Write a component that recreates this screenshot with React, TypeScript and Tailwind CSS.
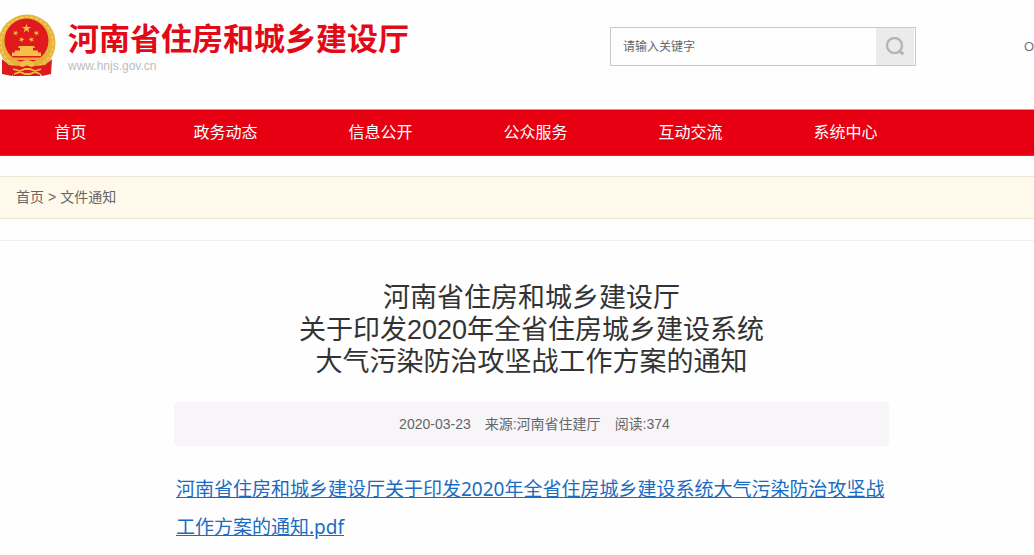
import React from 'react';

interface NavItem {
  label: string;
  href: string;
}

const navItems: NavItem[] = [
  { label: '首页', href: '#home' },
  { label: '政务动态', href: '#news' },
  { label: '信息公开', href: '#open' },
  { label: '公众服务', href: '#service' },
  { label: '互动交流', href: '#interact' },
  { label: '系统中心', href: '#system' },
];

const STAR = '0,-1 .22,-.31 .95,-.31 .36,.12 .59,.81 0,.38 -.59,.81 -.36,.12 -.95,-.31 -.22,-.31';

const Emblem: React.FC = () => (
  <svg className="w-[56px] h-[64px] shrink-0" viewBox="0 0 56 64" aria-hidden="true">
    <circle cx="27" cy="29" r="28.5" fill="#e6b33a" />
    <circle cx="27" cy="29" r="26" fill="none" stroke="#f3cf62" strokeWidth="1.5" strokeDasharray="3 2" />
    <circle cx="26.5" cy="26.5" r="22" fill="#e01a1c" />
    <g fill="#f3bf45">
      <polygon points={STAR} transform="translate(26.5 14.5) scale(4.8)" />
      <polygon points={STAR} transform="translate(15.5 19) rotate(20) scale(3)" />
      <polygon points={STAR} transform="translate(36.5 19) rotate(-20) scale(3)" />
      <polygon points={STAR} transform="translate(21.5 25.5) rotate(20) scale(3)" />
      <polygon points={STAR} transform="translate(31.5 25.5) rotate(-20) scale(3)" />
      {/* gate tower */}
      <path d="M19 32 H34 L35 34 H33 V36.5 H38 V38.5 H41 V42 H12 V38.5 H15 V36.5 H20 V34 H18 Z" />
      <path d="M8 43.5 H45 L43 46 H10 Z" fill="#e6a832" />
    </g>
    {/* drapery and cog wheel */}
    <path d="M2 45 L9 51 L18 52 L12 62 L2 60 Z M52 45 L45 51 L36 52 L42 62 L51 60 Z" fill="#dc1c1c" />
    <path d="M12 54 L20 51 L27 49 L34 51 L42 54 L40 62 H13 Z" fill="#e01a1c" />
    <path d="M19 52 Q20 46 27 46 Q34 46 35 52 L31 53 Q27 50 23 53 Z" fill="#f0bf48" />
    <path
      d="M13 55 L20 57 L25 55 L30 55 L35 57 L41 55 M14 60 L20 58 L25 60 H30 L35 58 L40 60"
      fill="none"
      stroke="#eebc42"
      strokeWidth="1.8"
    />
  </svg>
);

const Header: React.FC = () => (
  <header className="flex h-[109px] overflow-hidden">
    <a href="#home" className="flex shrink-0 items-start gap-3 pt-[14px]">
      <Emblem />
      <span className="flex flex-col pt-1.5">
        <span className="text-[31px] leading-10 font-bold text-[#e20a17]">河南省住房和城乡建设厅</span>
        <span className="text-xs leading-3 text-[#bdbdbd]">www.hnjs.gov.cn</span>
      </span>
    </a>
    <form className="ml-auto mt-[27px] flex h-[39px] w-[306px] shrink-0 border border-[#c8c8c8] pr-px">
      <input
        type="text"
        aria-label="请输入关键字"
        placeholder="请输入关键字"
        className="min-w-0 flex-1 px-3 text-xs text-[#666] outline-none placeholder:text-[#666]"
      />
      <button type="button" aria-label="搜索" className="flex w-[38px] items-center justify-center bg-[#ebebeb]">
        <svg className="h-5 w-5" viewBox="0 0 20 20" fill="none" stroke="#b5b5b5" strokeWidth="2.4">
          <circle cx="9.5" cy="8.5" r="7.5" />
          <path d="M13.5 14 L18.5 17" strokeWidth="3" />
        </svg>
      </button>
    </form>
    <a href="#oa" className="ml-[108px] mt-[37px] w-[10px] shrink-0 overflow-hidden text-[13px] leading-5 text-[#777]">
      O
    </a>
  </header>
);

const App: React.FC = () => {
  return (
    <div className="min-h-screen overflow-x-hidden bg-[#fefefe] font-['Liberation_Sans','Noto_Sans_CJK_SC',sans-serif]">
      <Header />

      <nav className="border-y border-t-[#f08a90] border-b-[#c8343c] bg-[#e60012]">
        <ul className="-ml-[7px] flex">
          {navItems.map((item) => (
            <li key={item.href} className="w-[155px] shrink-0">
              <a href={item.href} className="block text-center text-base leading-[45px] text-white">
                {item.label}
              </a>
            </li>
          ))}
        </ul>
      </nav>

      <div className="mt-5 border-y border-[#ebe7d2] bg-[#fef9ea] px-4 text-sm leading-[41px] text-[#666]">
        <a href="#home">首页</a>
        <span className="px-1">&gt;</span>
        <a href="#files">文件通知</a>
      </div>

      <main className="mt-[21px] border-t border-[#eee] pt-[41px] pl-[29px]">
        <article className="mx-auto max-w-[715px]">
          <h1 className="text-center text-[27px] leading-8 text-[#333]">
            河南省住房和城乡建设厅
            <br />
            关于印发2020年全省住房城乡建设系统
            <br />
            大气污染防治攻坚战工作方案的通知
          </h1>
          <div className="mt-6 flex justify-center gap-3.5 rounded bg-[#f7f5f8] pl-1.5 text-sm leading-[44px] text-[#666]">
            <span>2020-03-23</span>
            <span>来源:河南省住建厅</span>
            <span>阅读:374</span>
          </div>
          <p className="mt-6 px-0.5 font-['Noto_Sans','Noto_Sans_CJK_SC',sans-serif] text-[19px] leading-[38px]">
            <a href="#pdf" className="text-[#1b6cc0] underline">
              河南省住房和城乡建设厅关于印发2020年全省住房城乡建设系统大气污染防治攻坚战工作方案的通知.pdf
            </a>
          </p>
        </article>
      </main>
    </div>
  );
};

export default App;
